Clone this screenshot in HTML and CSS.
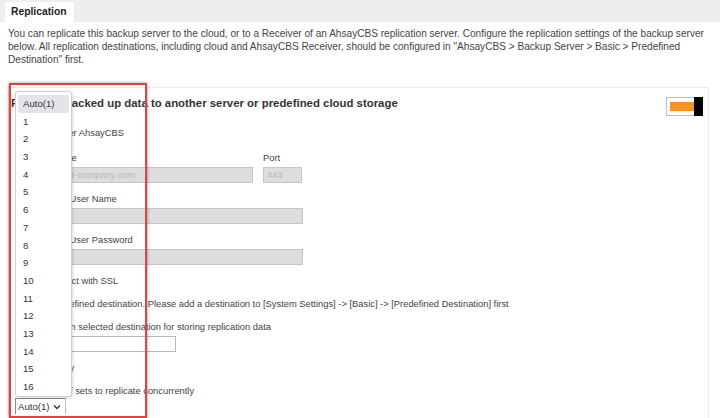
FILE: index.html
```html
<!DOCTYPE html>
<html lang="en">
<head>
  <meta charset="UTF-8" />
  <title>Replication</title>
  <link rel="stylesheet" href="styles.css">
</head>
<body>

<div class="tabbar">
  <div class="tab">Replication</div>
</div>

<p class="intro">You can replicate this backup server to the cloud, or to a Receiver of an AhsayCBS replication server. Configure the replication settings of the backup server below. All replication destinations, including cloud and AhsayCBS Receiver, should be configured in "AhsayCBS &gt; Backup Server &gt; Basic &gt; Predefined Destination" first.</p>

<section class="panel">
  <div class="panel-head">
    <h2>Replicate backed up data to another server or predefined cloud storage</h2>
    <div class="toggle"><span class="track"></span><span class="knob"></span></div>
  </div>

  <div class="form">
    <div class="row option"><span class="radio"></span>Another AhsayCBS</div>

    <div class="pair">
      <div class="col host">
        <div class="label">Host Name</div>
        <input class="input disabled" type="text" placeholder="www.your-company.com" disabled>
      </div>
      <div class="col port">
        <div class="label">Port</div>
        <input class="input disabled" type="text" placeholder="443" disabled>
      </div>
    </div>

    <div class="label gap">Receiver User Name</div>
    <input class="input disabled wide" type="text" disabled>

    <div class="label gap">Receiver User Password</div>
    <input class="input disabled wide" type="password" disabled>

    <div class="row option"><span class="check"></span>Connect with SSL</div>

    <div class="row note">No predefined destination. Please add a destination to [System Settings] -&gt; [Basic] -&gt; [Predefined Destination] first</div>

    <div class="label gap">Top path in selected destination for storing replication data</div>
    <input class="input folder" type="text">

    <div class="row">Frequency</div>
    <div class="row">Amount of sets to replicate concurrently</div>
    <div class="select">Auto(1)
      <svg width="8" height="6" viewBox="0 0 8 6"><path d="M1 1.5 L4 4.5 L7 1.5" fill="none" stroke="#333" stroke-width="1.4"/></svg>
    </div>
  </div>
</section>

<!-- open dropdown of the concurrency select -->
<ul class="dropdown">
  <li class="active">Auto(1)</li>
  <li>1</li><li>2</li><li>3</li><li>4</li><li>5</li><li>6</li><li>7</li><li>8</li>
  <li>9</li><li>10</li><li>11</li><li>12</li><li>13</li><li>14</li><li>15</li><li>16</li>
</ul>

<div class="highlight"></div>

</body>
</html>
```

FILE: styles.css
```css
html, body {
  margin: 0;
  padding: 0;
  height: 100%;
  overflow: hidden;
}

body {
  font-family: 'Liberation Sans', Arial, sans-serif;
  color: #444;
  background: #fff;
  position: relative;
}

.tabbar {
  background: #eeeeee;
  height: 22px;
  padding-left: 5px;
  display: flex;
  align-items: flex-end;
}

.tab {
  background: #fff;
  height: 20px;
  line-height: 20px;
  padding: 0 7px 0 6px;
  font-size: 10.3px;
  font-weight: bold;
  color: #222;
}

.intro {
  margin: 5px 8px 0;
  font-size: 10.1px;
  line-height: 13px;
  color: #444;
}

.panel {
  margin: 21px 11px 0 8px;
  border: 1px solid #ebebeb;
  border-bottom: none;
  height: 330px;
}

.panel-head {
  display: flex;
  justify-content: space-between;
  align-items: flex-start;
  padding: 8px 5px 0 2px;
}

.panel-head h2 {
  margin: 0;
  font-size: 11.4px;
  line-height: 14px;
  color: #333;
}

.toggle {
  position: relative;
  width: 37px;
  height: 19px;
  margin-top: 1px;
}

.toggle .track {
  position: absolute;
  left: 0;
  top: 0;
  width: 28px;
  height: 17px;
  border: 1px solid #bdbdbd;
  background: #fff;
}

.toggle .track::after {
  content: "";
  position: absolute;
  left: 3px;
  top: 4px;
  width: 25px;
  height: 9px;
  background: #f7941d;
}

.toggle .knob {
  position: absolute;
  right: 0;
  top: 0;
  width: 9px;
  height: 19px;
  background: #000;
}

.form {
  padding-left: 21px;
  font-size: 9.35px;
  color: #444;
}

.row, .label {
  line-height: 14px;
}

.row {
  margin-top: 9px;
}

.note {
  padding-left: 6px;
}

.option {
  display: flex;
  align-items: center;
  gap: 3px;
}

.form > .option:first-child {
  margin-top: 10px;
}

.radio, .check {
  width: 9px;
  height: 9px;
  border: 1px solid #888;
  background: #fff;
}

.radio {
  border-radius: 50%;
}

.pair {
  display: flex;
  gap: 10px;
  margin-top: 11px;
}

.label {
  margin-bottom: 2px;
}

.label.gap {
  margin-top: 9px;
}

.input {
  display: block;
  box-sizing: border-box;
  height: 16px;
  margin: 0;
  padding: 0 3px;
  font-family: inherit;
  font-size: 9.35px;
  border: 1px solid #c6c6c6;
  border-radius: 0;
  outline: none;
}

.input.disabled {
  background: #dddddd;
}

.input::placeholder {
  color: #b8b8b8;
}

.host .input {
  width: 223px;
}

.port .input {
  width: 39px;
}

.input.wide {
  width: 273px;
}

.input.folder {
  width: 146px;
  background: #fff;
  border-color: #b8b8b8;
}

.select {
  display: inline-flex;
  align-items: center;
  gap: 4px;
  margin-left: -15px;
  height: 16px;
  padding: 0 4px 0 2px;
  border: 1px solid #8a8a8a;
  border-right-color: #bbb;
  border-bottom: none;
  font-size: 9.6px;
  color: #333;
  background: #fff;
  box-sizing: border-box;
}

.dropdown {
  position: absolute;
  left: 15px;
  top: 91px;
  width: 57px;
  height: 306px;
  box-sizing: border-box;
  margin: 0;
  padding: 3px 2px;
  list-style: none;
  background: #fff;
  border: 1px solid #cfcfcf;
  border-radius: 3px;
  box-shadow: 1px 1px 3px rgba(0, 0, 0, 0.15);
  font-size: 9.6px;
  color: #333;
}

.dropdown li {
  height: 17.7px;
  line-height: 17.7px;
  padding-left: 5px;
}

.dropdown li.active {
  background: #e3e3e8;
  border-radius: 2px;
}

.highlight {
  position: absolute;
  left: 9px;
  top: 83px;
  width: 134px;
  height: 331px;
  border: 2px solid #e8403e;
  box-shadow: 0 0 3px rgba(0, 0, 0, 0.45);
  pointer-events: none;
}
```
